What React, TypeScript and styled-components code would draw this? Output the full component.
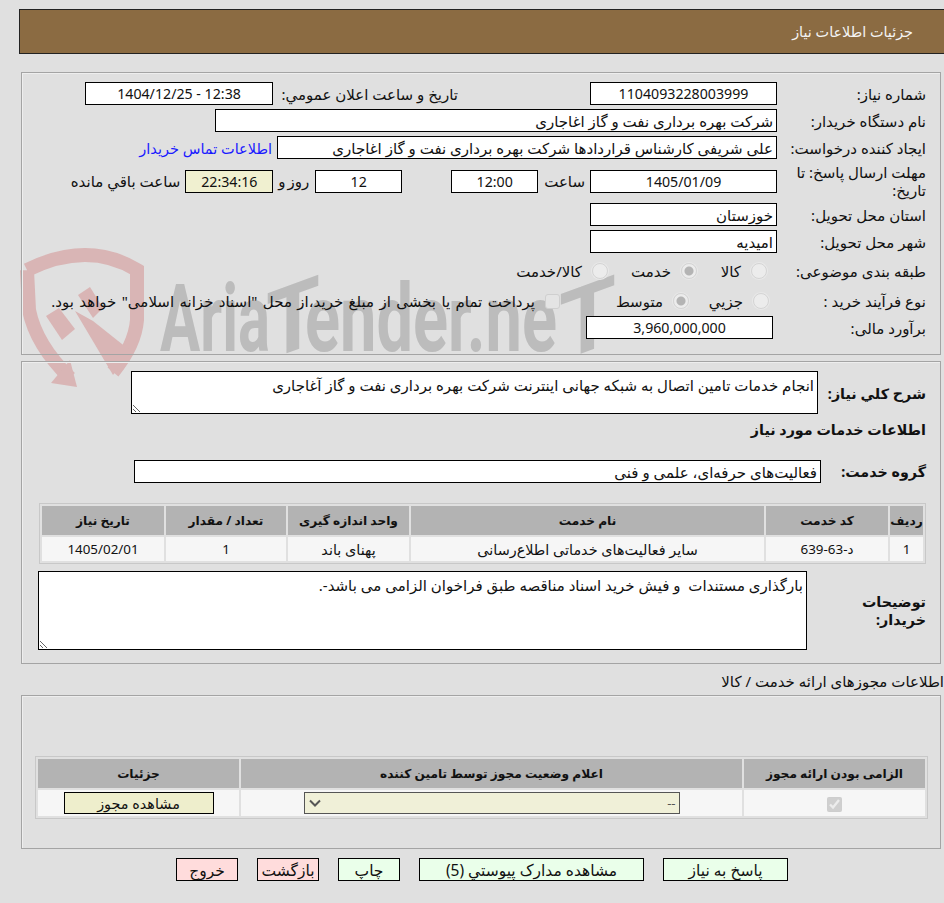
import React from "react";
import styled, { createGlobalStyle } from "styled-components";

const Global = createGlobalStyle`
  html, body { margin: 0; padding: 0; background: #e0e0e0; overflow: hidden; }
  body { font-family: "Noto Sans", "DejaVu Sans", sans-serif; font-size: 15px; color: #111; }
  * { box-sizing: border-box; }
`;

const Page = styled.div`
  position: relative;
  width: 944px;
  height: 903px;
  padding-top: 9px;
  overflow: hidden;
  direction: rtl;
`;

const Watermark = styled.svg`
  position: absolute;
  left: 0;
  top: 240px;
  z-index: 0;
`;

const MarkText = styled.text`
  font-family: Roboto, sans-serif;
  font-weight: 700;
  font-size: 94px;
  fill: #bcbcbc;
  direction: ltr;
`;

const Header = styled.div`
  position: relative;
  z-index: 1;
  margin-left: 19px;
  height: 45px;
  background: #8b6b42;
  border: 1px solid #222;
  border-right: 0;
  color: #f4f4f4;
  display: flex;
  align-items: center;
  padding-right: 31px;
  font-size: 14.4px;
`;

const Panel = styled.section<{ $top: number; $h: number }>`
  position: relative;
  z-index: 1;
  margin: ${(p) => p.$top}px 3px 0 21px;
  height: ${(p) => p.$h}px;
  border: 1px solid #a4a4a4;
  box-shadow: inset 1px 1px 0 #eee;
`;

const FormBody = styled.div`
  padding: 9px 14px 0 0;
  display: flex;
  flex-direction: column;
  gap: 4px;
`;

const Row = styled.div<{ $h?: number; $pt?: number }>`
  display: flex;
  align-items: center;
  height: ${(p) => p.$h ?? 23}px;
  padding-top: ${(p) => p.$pt ?? 0}px;
`;

const Label = styled.div<{ $w?: number; $gapR?: number }>`
  width: ${(p) => p.$w ?? 149}px;
  margin-right: ${(p) => p.$gapR ?? 0}px;
  flex: none;
  line-height: 18px;
  white-space: ${(p) => (p.$w ? "nowrap" : "normal")};
`;

const Box = styled.div<{ $w: number; $num?: boolean; $gapR?: number; $bg?: string }>`
  width: ${(p) => p.$w}px;
  height: 23px;
  flex: none;
  margin-right: ${(p) => p.$gapR ?? 0}px;
  background: ${(p) => p.$bg ?? "#fff"};
  border: 1px solid #000;
  display: flex;
  align-items: center;
  justify-content: ${(p) => (p.$num ? "center" : "flex-start")};
  padding: 0 3px;
  white-space: nowrap;
  overflow: hidden;
  font-size: ${(p) => (p.$num ? "14.2px" : "15px")};
`;

const Text = styled.span<{ $r?: number; $ws?: number }>`
  margin-right: ${(p) => p.$r ?? 0}px;
  word-spacing: ${(p) => p.$ws ?? 0}px;
  white-space: nowrap;
`;

const ContactLink = styled.a`
  color: #1a1aff;
  margin-right: 5px;
  white-space: nowrap;
  text-decoration: none;
  font-size: 14.5px;
`;

const Option = styled.label<{ $w: number; $pad?: number }>`
  width: ${(p) => p.$w}px;
  padding-right: ${(p) => p.$pad ?? 0}px;
  flex: none;
  display: flex;
  align-items: center;
  gap: 10px;
  white-space: nowrap;
`;

const Radio = styled.input.attrs({ type: "radio", disabled: true })`
  appearance: none;
  width: 16px;
  height: 16px;
  margin: 0;
  flex: none;
  border-radius: 50%;
  background: #ececec;
  border: 1px solid #d4d4d4;
  box-shadow: 0 0 0 1px #e8e8e8;
  &:checked {
    background: radial-gradient(circle, #b4b4b4 0 4px, #ececec 5px);
  }
`;

const Check = styled.input.attrs({ type: "checkbox", disabled: true })`
  appearance: none;
  width: 15px;
  height: 15px;
  margin: 0;
  flex: none;
  border-radius: 3px;
  background: #e4e4e4;
  border: 1px solid #cfcfcf;
`;

const NeedRow = styled.div`
  display: flex;
  align-items: flex-start;
  padding: 9px 14px 0 0;
  height: 59px;
`;

const BoldLabel = styled.div<{ $w: number; $pl?: number; $mt?: number }>`
  width: ${(p) => p.$w}px;
  padding-left: ${(p) => p.$pl ?? 0}px;
  margin-top: ${(p) => p.$mt ?? 0}px;
  flex: none;
  font-weight: 700;
  font-size: 14.3px;
  line-height: 18px;
`;

const NoteArea = styled.textarea<{ $w: number; $h: number }>`
  width: ${(p) => p.$w}px;
  height: ${(p) => p.$h}px;
  flex: none;
  direction: rtl;
  background: #fff;
  border: 1px solid #000;
  border-radius: 0;
  padding: 3px 3px 1px;
  margin: 0;
  font: inherit;
  color: #111;
  outline: none;
`;

const SectionTitle = styled.div`
  font-weight: 700;
  font-size: 14.3px;
  padding-right: 14px;
  height: 18px;
  line-height: 18px;
`;

const GroupRow = styled.div`
  display: flex;
  align-items: center;
  padding-right: 14px;
  margin-top: 21px;
`;

const Table = styled.table<{ $mt: number; $ml: number; $mr: number }>`
  border-collapse: separate;
  border-spacing: 2px;
  border: 1px solid #c8c8c8;
  margin: ${(p) => p.$mt}px ${(p) => p.$mr}px 0 ${(p) => p.$ml}px;
  table-layout: fixed;
  width: calc(100% - ${(p) => p.$ml + p.$mr}px);
`;

const Th = styled.th<{ $w?: number }>`
  background: #b3b3b3;
  height: 29px;
  padding: 0;
  font-size: 12.2px;
  font-weight: 700;
  text-align: center;
  width: ${(p) => (p.$w ? `${p.$w}px` : "auto")};
`;

const Td = styled.td<{ $h: number; $num?: boolean }>`
  background: #f6f6f6;
  height: ${(p) => p.$h}px;
  padding: 0;
  text-align: center;
  white-space: nowrap;
  font-size: ${(p) => (p.$num ? "13.4px" : "14.4px")};
`;

const BuyerRow = styled.div`
  display: flex;
  align-items: center;
  margin-top: 7px;
  padding-right: 14px;
`;

const OuterTitle = styled.div`
  position: relative;
  z-index: 1;
  margin-top: 8px;
  height: 23px;
  line-height: 18px;
`;

const SelectBox = styled.select`
  appearance: none;
  width: 376px;
  height: 22px;
  direction: rtl;
  background-color: #f0f0d8;
  background-image: url("data:image/svg+xml,%3Csvg xmlns='http://www.w3.org/2000/svg' width='12' height='8'%3E%3Cpath d='M1 1.5 6 6.5 11 1.5' fill='none' stroke='%23555' stroke-width='2'/%3E%3C/svg%3E");
  background-repeat: no-repeat;
  background-position: 4px center;
  border: 1px solid #555;
  border-radius: 0;
  font: inherit;
  font-size: 13px;
  padding: 0 3px;
  display: block;
  margin: 0 auto;
  color: #555;
`;

const LicenseButton = styled.button`
  width: 150px;
  height: 22px;
  background: #eeeecc;
  border: 1px solid #000;
  font: inherit;
  padding: 0;
  color: #111;
  display: block;
  margin: 0 auto;
`;

const LicenseCheck = styled.input.attrs({ type: "checkbox", disabled: true, defaultChecked: true })`
  width: 15px;
  height: 15px;
  margin: 0;
  vertical-align: middle;
`;

const Actions = styled.div`
  position: relative;
  z-index: 1;
  display: flex;
  gap: 19px;
  margin-top: 9px;
  padding-right: 156px;
`;

const ActionButton = styled.button<{ $w: number; $bg: string }>`
  width: ${(p) => p.$w}px;
  height: 23px;
  background: ${(p) => p.$bg};
  border: 1px solid #000;
  font: inherit;
  font-size: 15.5px;
  padding: 0;
  color: #111;
`;

const ShieldInk = "#d9b5b5";

export default function App() {
  return (
    <Page>
      <Global />
      <Watermark width="640" height="160" viewBox="0 240 640 160">
        <path
          d="M27 270 Q88 240 137 270 L137 320 Q135 345 113 372 M27 270 L29 310 Q36 345 70 378"
          fill="none"
          stroke={ShieldInk}
          strokeWidth="14"
        />
        <path d="M51 383 L77 387 L70 360 Z" fill={ShieldInk} />
        <path d="M46 316 L62 340 L75 329 L59 308 Z" fill={ShieldInk} />
        <path d="M78 295 L90 287 L103 308 L93 318 Z" fill={ShieldInk} />
        <path d="M75 311 L93 321 L132 352 L113 375 Z" fill={ShieldInk} />
        <MarkText x="160" y="351" textLength="110" lengthAdjust="spacingAndGlyphs">Aria</MarkText>
        <MarkText transform="translate(293 351) skewY(-20)" x="-27" y="0" textLength="54" lengthAdjust="spacingAndGlyphs">T</MarkText>
        <MarkText x="305" y="351" textLength="252" lengthAdjust="spacingAndGlyphs">ender.ne</MarkText>
        <MarkText transform="translate(588 351) skewY(-20)" x="-29" y="0" textLength="57" lengthAdjust="spacingAndGlyphs">T</MarkText>
      </Watermark>

      <Header>جزئیات اطلاعات نیاز</Header>

      <Panel $top={18} $h={283}>
        <FormBody>
          <Row>
            <Label>شماره نیاز:</Label>
            <Box $w={187} $num>1104093228003999</Box>
            <Label $w={180} $gapR={132}>تاریخ و ساعت اعلان عمومي:</Label>
            <Box $w={188} $num $gapR={5}>12:38 - 1404/12/25</Box>
          </Row>
          <Row>
            <Label>نام دستگاه خریدار:</Label>
            <Box $w={562}>شرکت بهره برداری نفت و گاز اغاجاری</Box>
          </Row>
          <Row>
            <Label>ایجاد کننده درخواست:</Label>
            <Box $w={500}>علی شریفی کارشناس قراردادها شرکت بهره برداری نفت و گاز اغاجاری</Box>
            <ContactLink href="#">اطلاعات تماس خریدار</ContactLink>
          </Row>
          <Row $h={36}>
            <Label>مهلت ارسال پاسخ: تا تاریخ:</Label>
            <Box $w={187} $num>1405/01/09</Box>
            <Text $r={5}>ساعت</Text>
            <Box $w={87} $num $gapR={6}>12:00</Box>
            <Box $w={87} $num $gapR={49}>12</Box>
            <Text $r={6} $ws={-2}>روز و</Text>
            <Box $w={88} $num $gapR={5} $bg="#f0f0d0">22:34:16</Box>
            <Text $r={5}>ساعت باقي مانده</Text>
          </Row>
          <Row>
            <Label>استان محل تحویل:</Label>
            <Box $w={187}>خوزستان</Box>
          </Row>
          <Row>
            <Label>شهر محل تحویل:</Label>
            <Box $w={187}>امیدیه</Box>
          </Row>
          <Row $h={27}>
            <Label>طبقه بندی موضوعی:</Label>
            <Option $w={80} $pad={10}><Radio name="a" />کالا</Option>
            <Option $w={89}><Radio name="a" defaultChecked />خدمت</Option>
            <Option $w={110}><Radio name="a" />کالا/خدمت</Option>
          </Row>
          <Row $h={24} $pt={2}>
            <Label>نوع فرآیند خرید :</Label>
            <Option $w={80} $pad={8}><Radio name="b" />جزيي</Option>
            <Option $w={137} $pad={8}><Radio name="b" defaultChecked />متوسط</Option>
            <Check />
            <Text $r={10} $ws={1.5}>پرداخت تمام یا بخشی از مبلغ خرید،از محل "اسناد خزانه اسلامی" خواهد بود.</Text>
          </Row>
          <Row>
            <Label>برآورد مالی:</Label>
            <Box $w={187} $num $gapR={4}>3,960,000,000</Box>
          </Row>
        </FormBody>
      </Panel>

      <Panel $top={6} $h={303}>
        <NeedRow>
          <BoldLabel $w={108} $mt={14}>شرح کلي نیاز:</BoldLabel>
          <NoteArea $w={687} $h={43} readOnly defaultValue="انجام خدمات تامین اتصال به شبکه جهانی اینترنت شرکت بهره برداری نفت و گاز آغاجاری" />
        </NeedRow>
        <SectionTitle>اطلاعات خدمات مورد نیاز</SectionTitle>
        <GroupRow>
          <BoldLabel $w={105}>گروه خدمت:</BoldLabel>
          <Box $w={687}>فعالیت‌های حرفه‌ای، علمی و فنی</Box>
        </GroupRow>
        <Table $mt={20} $ml={17} $mr={14}>
          <thead>
            <tr>
              <Th $w={33}>ردیف</Th>
              <Th $w={122}>کد خدمت</Th>
              <Th $w={353}>نام خدمت</Th>
              <Th $w={121}>واحد اندازه گیری</Th>
              <Th $w={120}>تعداد / مقدار</Th>
              <Th>تاریخ نیاز</Th>
            </tr>
          </thead>
          <tbody>
            <tr>
              <Td $h={24} $num>1</Td>
              <Td $h={24} $num>د-63-639</Td>
              <Td $h={24}>سایر فعالیت‌های خدماتی اطلاع‌رسانی</Td>
              <Td $h={24}>پهنای باند</Td>
              <Td $h={24} $num>1</Td>
              <Td $h={24} $num>1405/02/01</Td>
            </tr>
          </tbody>
        </Table>
        <BuyerRow>
          <BoldLabel $w={119} $pl={40}>توضیحات خریدار:</BoldLabel>
          <NoteArea $w={769} $h={79} readOnly defaultValue="بارگذاری مستندات  و فیش خرید اسناد مناقصه طبق فراخوان الزامی می باشد-." />
        </BuyerRow>
      </Panel>

      <OuterTitle>اطلاعات مجوزهای ارائه خدمت / کالا</OuterTitle>

      <Panel $top={0} $h={154}>
        <Table $mt={60} $ml={13} $mr={12}>
          <thead>
            <tr>
              <Th $w={181}>الزامی بودن ارائه مجوز</Th>
              <Th $w={501}>اعلام وضعیت مجوز توسط تامین کننده</Th>
              <Th>جزئیات</Th>
            </tr>
          </thead>
          <tbody>
            <tr>
              <Td $h={26}><LicenseCheck /></Td>
              <Td $h={26}><SelectBox defaultValue="--"><option>--</option></SelectBox></Td>
              <Td $h={26}><LicenseButton>مشاهده مجوز</LicenseButton></Td>
            </tr>
          </tbody>
        </Table>
      </Panel>

      <Actions>
        <ActionButton $w={125} $bg="#eaffea">پاسخ به نیاز</ActionButton>
        <ActionButton $w={225} $bg="#eaffea">مشاهده مدارک پیوستي (5)</ActionButton>
        <ActionButton $w={62} $bg="#eaffea">چاپ</ActionButton>
        <ActionButton $w={62} $bg="#ffdcdc">بازگشت</ActionButton>
        <ActionButton $w={62} $bg="#ffdcdc">خروج</ActionButton>
      </Actions>
    </Page>
  );
}
